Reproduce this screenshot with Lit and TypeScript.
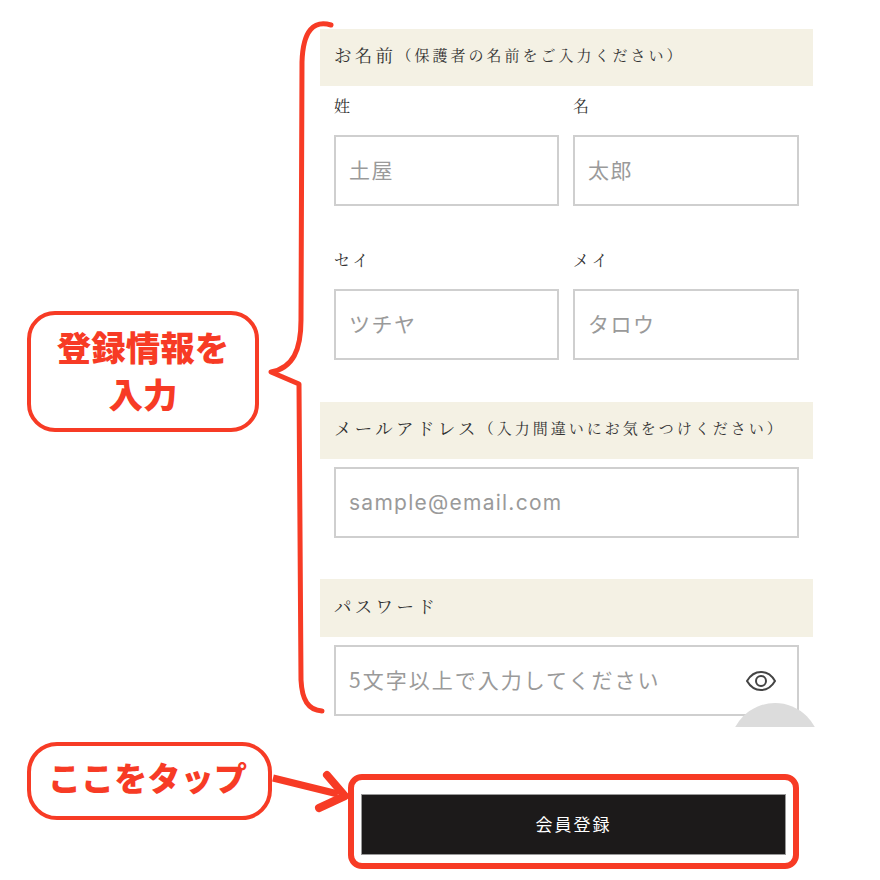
import { LitElement, html, css, svg } from "lit";
import { customElement } from "lit/decorators.js";

const eye = html`<svg class="eye" width="30" height="22" viewBox="0 0 30 22" fill="none" stroke="#444" stroke-width="2">
  <path d="M1 11C4.500 5 9 2 15 2s10.500 3 14 9C25.500 17 21 20 15 20S4.500 17 1 11Z"/>
  <circle cx="15" cy="11" r="5"/>
</svg>`;

const annotations = svg`
  <path d="M331 25C314 20 303 30 302 62L301 320C301 350 293 368 271 372L299 384L301 680C302 700 308 710 322 711" fill="none" stroke="#f73b25" stroke-width="5" stroke-linecap="round" stroke-linejoin="round"/>
  <path d="M273 778L338 794" fill="none" stroke="#f73b25" stroke-width="7"/>
  <path d="M327 775L345 796L319 808" fill="none" stroke="#f73b25" stroke-width="8" stroke-linecap="round" stroke-linejoin="round"/>
`;

@customElement("app-root")
export class AppRoot extends LitElement {
  static styles = css`
    :host {
      display: block;
      position: relative;
      width: 880px;
      height: 880px;
      background: #fff;
      overflow: hidden;
      font-family: "Noto Serif CJK JP", "Noto Sans CJK JP", serif;
      color: #333;
    }
    .form {
      width: 493px;
      margin-left: 320px;
      padding-top: 29px;
      display: flex;
      flex-direction: column;
      height: 698px;
      overflow: hidden;
    }
    .head {
      height: 57px;
      flex: none;
      box-sizing: border-box;
      background: #f4f1e4;
      display: flex;
      align-items: center;
      padding: 0 0 6px 14px;
      font-size: 17.500px;
      letter-spacing: 3.300px;
      white-space: nowrap;
    }
    .head small {
      font-size: 15px;
      letter-spacing: 3px;
    }
    .pair {
      display: grid;
      grid-template-columns: 225px 226px;
      column-gap: 14px;
      padding-left: 14px;
    }
    .pair label {
      display: block;
      font-size: 16px;
      letter-spacing: 3px;
      height: 22px;
      line-height: 21px;
      margin-bottom: 18px;
    }
    .first { margin-top: 9px; }
    .second { margin-top: 43px; }
    .box {
      height: 71px;
      box-sizing: border-box;
      border: 2px solid #cfcfcf;
      display: flex;
      align-items: center;
      justify-content: space-between;
      padding: 0 20px 3px 13px;
      font-family: "Noto Sans CJK JP", sans-serif;
      font-size: 21px;
      color: #9a9a9a;
      letter-spacing: 1.500px;
      white-space: nowrap;
    }
    .wide { margin: 8px 14px 0; }
    .mail {
      font-family: Inter, "Noto Sans CJK JP", sans-serif;
      letter-spacing: 1.250px;
      padding-bottom: 0;
    }
    .h2 { margin-top: 42px; }
    .h3 { margin-top: 41px; height: 58px; }
    .pw { letter-spacing: 2px; }
    .fab {
      position: absolute;
      left: 730px;
      top: 703px;
      width: 90px;
      height: 24px;
      overflow: hidden;
    }
    .fab::before {
      content: "";
      display: block;
      width: 90px;
      height: 90px;
      border-radius: 50%;
      background: #dcdcdc;
    }
    .eye { flex: none; margin: 3px 1px 0 0; }

    .submit-ring {
      position: absolute;
      left: 348px;
      top: 774px;
      width: 451px;
      height: 95px;
      box-sizing: border-box;
      border: 6px solid #f73b25;
      border-radius: 14px;
      display: flex;
      padding: 14px 7px 8px;
    }
    .submit {
      flex: 1;
      background: #1c1a1a;
      border: 1px solid #999;
      color: #fff;
      display: flex;
      align-items: center;
      justify-content: center;
      padding-bottom: 3px;
      font-family: "Noto Sans CJK JP", sans-serif;
      font-size: 17px;
      letter-spacing: 2px;
    }
    .callout {
      position: absolute;
      box-sizing: border-box;
      border: 4px solid #f73b25;
      background: #fff;
      color: #f73b25;
      font-family: "Noto Sans CJK JP", sans-serif;
      font-weight: 900;
      display: flex;
      align-items: center;
      justify-content: center;
      text-align: center;
    }
    .c1 {
      left: 27px;
      top: 311px;
      width: 232px;
      height: 121px;
      border-radius: 28px;
      font-size: 34.500px;
      line-height: 47px;
      padding-bottom: 3px;
    }
    .c2 {
      left: 27px;
      top: 742px;
      width: 245px;
      height: 78px;
      border-radius: 30px;
      padding: 0 4px 8px 0;
      font-size: 33px;
      letter-spacing: 0.200px;
      white-space: nowrap;
    }
    .overlay { position: absolute; left: 0; top: 0; }
  `;

  render() {
    return html`
      <div class="form">
        <div class="head">お名前<small>（保護者の名前をご入力ください）</small></div>
        <div class="pair first">
          <div><label>姓</label><div class="box">土屋</div></div>
          <div><label>名</label><div class="box">太郎</div></div>
        </div>
        <div class="pair second">
          <div><label>セイ</label><div class="box">ツチヤ</div></div>
          <div><label>メイ</label><div class="box">タロウ</div></div>
        </div>
        <div class="head h2">メールアドレス<small>（入力間違いにお気をつけください）</small></div>
        <div class="box wide mail">sample@email.com</div>
        <div class="head h3">パスワード</div>
        <div class="box wide pw">5文字以上で入力してください${eye}</div>
      </div>
      <div class="fab"></div>
      <div class="submit-ring"><div class="submit">会員登録</div></div>
      <svg class="overlay" width="880" height="880" viewBox="0 0 880 880">${annotations}</svg>
      <div class="callout c1">登録情報を<br />入力</div>
      <div class="callout c2">ここをタップ</div>
    `;
  }
}
